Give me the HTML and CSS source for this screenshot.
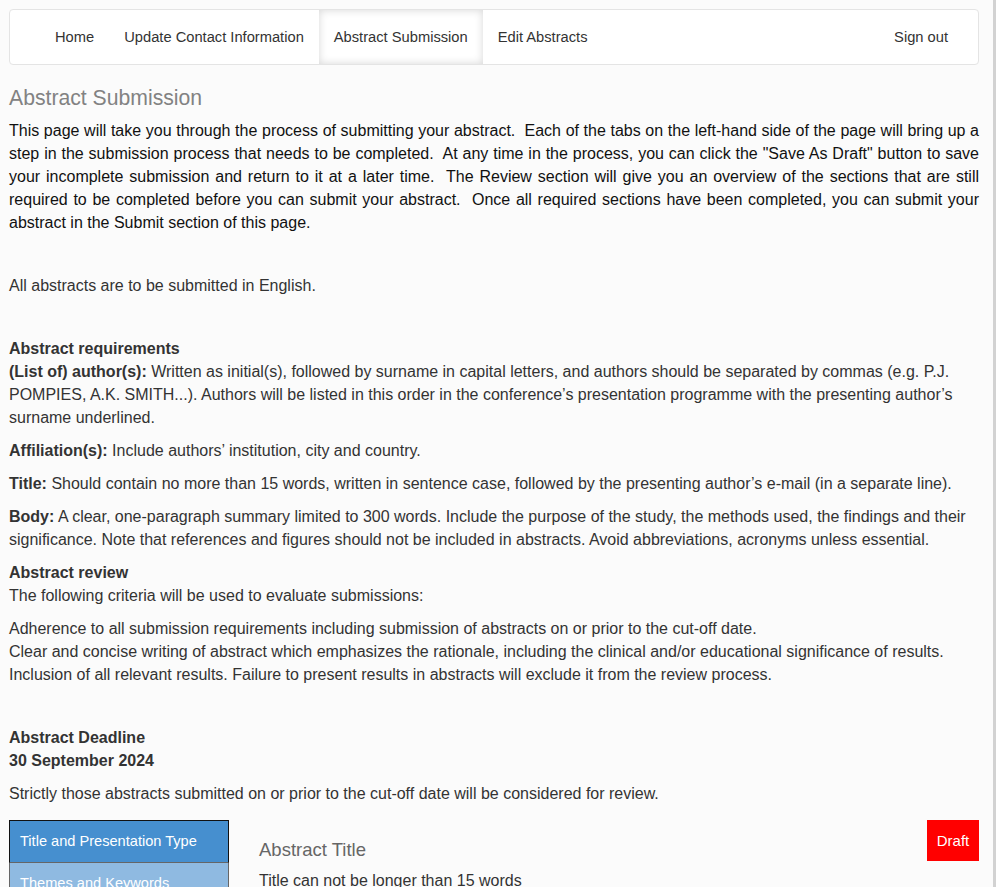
FILE: index.html
```html
<!DOCTYPE html>
<html lang="en">
<head>
<meta charset="utf-8">
<title>Abstract Submission</title>
<link rel="stylesheet" href="styles.css">
</head>
<body>
<div class="page">
  <nav class="navbar">
    <ul class="nav-left">
      <li><a href="#">Home</a></li>
      <li><a href="#">Update Contact Information</a></li>
      <li class="active"><a href="#">Abstract Submission</a></li>
      <li><a href="#">Edit Abstracts</a></li>
    </ul>
    <ul class="nav-right">
      <li><a href="#">Sign out</a></li>
    </ul>
  </nav>

  <h1 class="page-title">Abstract Submission</h1>

  <p class="intro">This page will take you through the process of submitting your abstract.&nbsp; Each of the tabs on the left-hand side of the page will bring up a step in the submission process that needs to be completed.&nbsp; At any time in the process, you can click the "Save As Draft" button to save your incomplete submission and return to it at a later time.&nbsp; The Review section will give you an overview of the sections that are still required to be completed before you can submit your abstract.&nbsp; Once all required sections have been completed, you can submit your abstract in the Submit section of this page.</p>

  <p class="spaced">All abstracts are to be submitted in English.</p>

  <p><strong>Abstract requirements</strong><br>
  <strong>(List of) author(s):</strong> Written as initial(s), followed by surname in capital letters, and authors should be separated by commas (e.g. P.J. POMPIES, A.K. SMITH...). Authors will be listed in this order in the conference’s presentation programme with the presenting author’s surname underlined.</p>
  <p><strong>Affiliation(s):</strong> Include authors’ institution, city and country.</p>
  <p><strong>Title:</strong> Should contain no more than 15 words, written in sentence case, followed by the presenting author’s e-mail (in a separate line).</p>
  <p><strong>Body:</strong> A clear, one-paragraph summary limited to 300 words. Include the purpose of the study, the methods used, the findings and their significance. Note that references and figures should not be included in abstracts. Avoid abbreviations, acronyms unless essential.</p>
  <p><strong>Abstract review</strong><br>The following criteria will be used to evaluate submissions:</p>
  <p class="spaced">Adherence to all submission requirements including submission of abstracts on or prior to the cut-off date.<br>
  Clear and concise writing of abstract which emphasizes the rationale, including the clinical and/or educational significance of results.<br>
  Inclusion of all relevant results. Failure to present results in abstracts will exclude it from the review process.</p>

  <p><strong>Abstract Deadline<br>30 September 2024</strong></p>
  <p>Strictly those abstracts submitted on or prior to the cut-off date will be considered for review.</p>

  <div class="wizard">
    <ul class="tabs">
      <li class="tab active">Title and Presentation Type</li>
      <li class="tab">Themes and Keywords</li>
      <li class="tab">Authors</li>
    </ul>
    <div class="panel">
      <div class="panel-head">
        <h2 class="panel-title">Abstract Title</h2>
        <span class="draft">Draft</span>
      </div>
      <p class="hint">Title can not be longer than 15 words</p>
    </div>
  </div>
</div>
</body>
</html>
```

FILE: styles.css
```css
html {
  background: #fbfbfb;
  border-right: 3px solid #d2d2d2;
}
body {
  margin: 0;
  font-family: "Liberation Sans", Arial, sans-serif;
  font-size: 16px;
  line-height: 23px;
  color: #333;
}
.page {
  width: 970px;
  margin-left: 9px;
  padding-top: 9px;
}
.navbar {
  display: flex;
  justify-content: space-between;
  background: #fff;
  border: 1px solid #e4e4e4;
  border-radius: 4px;
  padding: 0 15px 0 30px;
  font-size: 14.7px;
}
.navbar ul {
  list-style: none;
  margin: 0;
  padding: 0;
  display: flex;
}
.navbar a {
  display: block;
  padding: 17px 15px;
  line-height: 20px;
  color: #333;
  text-decoration: none;
}
.navbar .active a {
  background: #fff;
  box-shadow: inset 0 0 9px rgba(0, 0, 0, 0.16);
}
.page-title {
  margin: 21px 0 10px;
  font-size: 21.2px;
  line-height: 23px;
  font-weight: normal;
  color: #828282;
}
p {
  margin: 0 0 10px;
}
.intro {
  color: #111;
  text-align: justify;
  margin-bottom: 40px;
}
.spaced {
  margin-bottom: 40px;
}
strong {
  font-weight: bold;
}
.wizard {
  display: flex;
  margin-top: 15px;
}
.tabs {
  list-style: none;
  margin: 0;
  padding: 0;
  width: 220px;
  flex-shrink: 0;
  font-size: 14.6px;
}
.tab {
  height: 41px;
  line-height: 41px;
  padding-left: 10px;
  color: #fff;
  background: #8fbae1;
  border: 1px solid #666;
  border-top: none;
}
.tab.active {
  background: #468fcf;
  border: 1px solid #111;
  border-bottom: 1px solid #666;
}
.panel {
  flex: 1;
  margin-left: 30px;
}
.panel-head {
  display: flex;
  justify-content: space-between;
  align-items: flex-start;
}
.panel-title {
  margin: 20px 0 0;
  font-size: 18.5px;
  line-height: 20px;
  font-weight: normal;
  color: #666;
}
.draft {
  display: block;
  width: 52px;
  height: 41px;
  line-height: 41px;
  text-align: center;
  background: #ff0000;
  color: #fff;
  font-size: 15px;
}
.hint {
  margin: 8px 0 0;
}
```
